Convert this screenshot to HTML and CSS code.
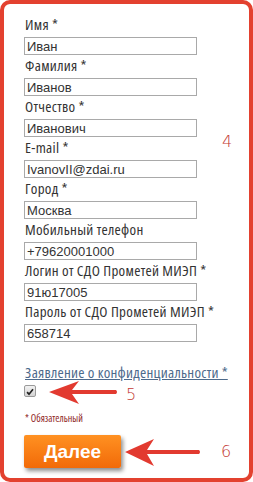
FILE: index.html
```html
<!DOCTYPE html>
<html lang="ru">
<head>
<meta charset="utf-8">
<link rel="stylesheet" href="styles.css">
</head>
<body>
<div class="frame">
  <form class="form">
    <div class="field"><label class="label">Имя *</label><input class="input" value="Иван"></div>
    <div class="field"><label class="label">Фамилия *</label><input class="input" value="Иванов"></div>
    <div class="field"><label class="label">Отчество *</label><input class="input" value="Иванович"></div>
    <div class="field"><label class="label">E-mail *</label><input class="input" value="IvanovII@zdai.ru"></div>
    <div class="field"><label class="label">Город *</label><input class="input" value="Москва"></div>
    <div class="field"><label class="label">Мобильный телефон</label><input class="input" value="+79620001000"></div>
    <div class="field"><label class="label">Логин от СДО Прометей МИЭП *</label><input class="input" value="91ю17005"></div>
    <div class="field"><label class="label">Пароль от СДО Прометей МИЭП *</label><input class="input" value="658714"></div>
    <a class="privacy" href="#">Заявление о конфиденциальности *</a>
    <span class="check"><svg width="12" height="12" viewBox="0 0 12 12"><path d="M2.5 6.2 L4.8 8.6 L9.6 2.8" fill="none" stroke="#222" stroke-width="2"/></svg></span>
    <p class="required">* Обязательный</p>
    <button class="next" type="button">Далее</button>
  </form>
  <svg class="notes" width="253" height="482" viewBox="0 0 253 482">
    <path d="M49 392 L79 381 L72 390 L116 390 Q118 392 116 394 L72 394 L79 404 Z" fill="#e23a30"/>
    <path d="M125 452 L154 439 L147 450 L199 450 Q201 452 199 454 L147 454 L154 466 Z" fill="#e23a30"/>
  </svg>
  <span class="num n4">4</span>
  <span class="num n5">5</span>
  <span class="num n6">6</span>
</div>
</body>
</html>
```
FILE: styles.css
```css
html, body {
  margin: 0;
  padding: 0;
  background: #fff;
}
.frame {
  position: relative;
  box-sizing: border-box;
  width: 253px;
  height: 482px;
  border: 4px solid #e3412f;
  border-radius: 10px;
  padding: 10px 0 0 20px;
  font-family: "Open Sans", "Liberation Sans", sans-serif;
  font-stretch: 75%;
  color: #333;
}
.form {
  display: flex;
  flex-direction: column;
  align-items: flex-start;
}
.field {
  display: flex;
  flex-direction: column;
  align-items: flex-start;
}
.label {
  display: block;
  font-size: 15px;
  letter-spacing: 0.3px;
  line-height: 20px;
  margin-bottom: 3px;
  padding-left: 1px;
  white-space: nowrap;
  color: #333;
}
.input {
  box-sizing: border-box;
  width: 173px;
  height: 18px;
  margin: 0;
  border: 1px solid #a9a9a9;
  padding: 0 2px;
  font-family: "Liberation Sans", Arial, sans-serif;
  font-stretch: normal;
  font-size: 13px;
  color: #333;
  background: #fff;
}
.privacy {
  margin-top: 20px;
  font-size: 15px;
  letter-spacing: 0.25px;
  line-height: 20px;
  color: #4d6a8b;
  text-decoration: underline;
  padding-left: 1px;
  white-space: nowrap;
}
.check {
  box-sizing: border-box;
  margin-top: 3px;
  width: 12px;
  height: 12px;
  border: 1px solid #9a9a9a;
  border-radius: 2px;
  background: linear-gradient(#f2f2f2, #d4d4d4);
  display: flex;
}
.required {
  margin: 14px 0 0;
  font-size: 10px;
  line-height: 14px;
  color: #8e2323;
  padding-left: 1px;
  white-space: nowrap;
}
.next {
  margin-top: 10px;
  width: 97px;
  height: 33px;
  border: none;
  border-radius: 2px;
  background: linear-gradient(#ff9122, #f26a08);
  box-shadow: 2px 3px 4px rgba(0, 0, 0, 0.45);
  color: #fff;
  font-family: "Liberation Sans", Arial, sans-serif;
  font-stretch: normal;
  font-weight: bold;
  font-size: 19px;
  padding: 0;
}
.notes {
  position: absolute;
  left: -4px;
  top: -4px;
}
.num {
  position: absolute;
  font-family: "DejaVu Sans", sans-serif;
  font-stretch: normal;
  font-weight: 200;
  font-size: 16px;
  line-height: 16px;
  color: #c43a33;
}
.n4 { left: 218px; top: 130px; }
.n5 { left: 122px; top: 383px; }
.n6 { left: 217px; top: 440px; }
```
